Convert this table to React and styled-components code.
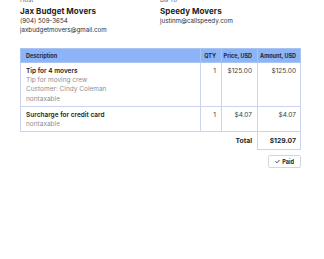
import React from "react"
import styled, { createGlobalStyle } from "styled-components"

const GlobalStyle = createGlobalStyle`
  html, body {
    margin: 0;
    padding: 0;
    background: #ffffff;
  }
  body {
    font-family: Inter, "Liberation Sans", sans-serif;
    color: #1c1f26;
    overflow: hidden;
  }
`

const Page = styled.div`
  width: 324px;
  margin-top: -4px;
  padding: 0 24px 0 20px;
  box-sizing: border-box;
`

const Parties = styled.div`
  display: grid;
  grid-template-columns: 140px 1fr;
`

const Party = styled.div`
  display: flex;
  flex-direction: column;
`

const Label = styled.div`
  font-size: 6px;
  line-height: 8px;
  color: #555b66;
  height: 8px;
`

const Name = styled.div`
  font-size: 8px;
  font-weight: 700;
  line-height: 10px;
  margin-top: 2px;
  letter-spacing: 0.05px;
`

const Line = styled.div`
  font-size: 6.2px;
  line-height: 9px;
  color: #2a2e36;
`

const Table = styled.table`
  width: 280px;
  margin-top: 14px;
  border-collapse: collapse;
  table-layout: fixed;
  font-size: 6.5px;
`

const HeadCell = styled.th`
  background: #8db4f6;
  color: #1d2740;
  font-size: 5.5px;
  font-weight: 700;
  height: 14px;
  white-space: nowrap;
  overflow: hidden;
  padding: 0 ${({ $pad }) => $pad || 4}px 0 ${({ $align }) => ($align ? 0 : 5)}px;
  text-align: ${({ $align }) => $align || "left"};
  border: 1px solid #a9c3f3;
  box-sizing: border-box;
`

const Cell = styled.td`
  vertical-align: top;
  padding: 4px ${({ $pad }) => $pad || 4}px 2px ${({ $align }) => ($align ? 0 : 5)}px;
  line-height: 9.2px;
  white-space: nowrap;
  text-align: ${({ $align }) => $align || "left"};
  border: 1px solid #ccd3ee;
  color: #3a3f48;
`

const TotalCell = styled.td`
  padding: 0 ${({ $pad }) => $pad || 4}px 0 0;
  height: 17px;
  text-align: right;
  font-weight: 700;
  font-size: 6.8px;
  white-space: nowrap;
  color: #1c1f26;
  border: ${({ $boxed }) => ($boxed ? "1px solid #ccd3ee" : "none")};
`

const ItemTitle = styled.div`
  font-weight: 600;
  color: #1c1f26;
`

const ItemNote = styled.div`
  color: #8c8f96;
`

const Actions = styled.div`
  display: flex;
  justify-content: flex-end;
  margin-top: 5px;
  width: 281px;
`

const PaidButton = styled.button`
  display: flex;
  align-items: center;
  gap: 2px;
  height: 13px;
  padding: 0 6px;
  font-family: Inter, "Liberation Sans", sans-serif;
  font-size: 5.6px;
  font-weight: 700;
  color: #1c1f26;
  background: #ffffff;
  border: 1px solid #d3d6de;
  border-radius: 2px;
`

const items = [
  {
    title: "Tip for 4 movers",
    notes: ["Tip for moving crew", "Customer: Cindy Coleman", "nontaxable"],
    qty: 1,
    price: "$125.00",
    amount: "$125.00",
  },
  {
    title: "Surcharge for credit card",
    notes: ["nontaxable"],
    qty: 1,
    price: "$4.07",
    amount: "$4.07",
  },
]

const Check = () => (
  <svg width="5" height="5" viewBox="0 0 10 10" fill="none">
    <path d="M1.5 5.2 L4 7.6 L8.6 2.4" stroke="#1c1f26" strokeWidth="1.6" strokeLinecap="round" strokeLinejoin="round" />
  </svg>
)

const App = () => (
  <>
    <GlobalStyle />
    <Page>
      <Parties>
        <Party>
          <Label>Host</Label>
          <Name>Jax Budget Movers</Name>
          <Line>(904) 509-3654</Line>
          <Line>jaxbudgetmovers@gmail.com</Line>
        </Party>
        <Party>
          <Label>Bill To</Label>
          <Name>Speedy Movers</Name>
          <Line>justinm@callspeedy.com</Line>
        </Party>
      </Parties>

      <Table>
        <colgroup>
          <col style={{ width: 180 }} />
          <col style={{ width: 21 }} />
          <col style={{ width: 36 }} />
          <col style={{ width: 43 }} />
        </colgroup>
        <thead>
          <tr>
            <HeadCell>Description</HeadCell>
            <HeadCell $align="right" $pad={5}>QTY</HeadCell>
            <HeadCell $align="right" $pad={5}>Price, USD</HeadCell>
            <HeadCell $align="right" $pad={4}>Amount, USD</HeadCell>
          </tr>
        </thead>
        <tbody>
          {items.map((item, key) => (
            <tr key={key}>
              <Cell>
                <ItemTitle>{item.title}</ItemTitle>
                {item.notes.map((note, i) => (
                  <ItemNote key={i}>{note}</ItemNote>
                ))}
              </Cell>
              <Cell $align="right" $pad={5}>{item.qty}</Cell>
              <Cell $align="right" $pad={5}>{item.price}</Cell>
              <Cell $align="right" $pad={4}>{item.amount}</Cell>
            </tr>
          ))}
          <tr>
            <TotalCell />
            <TotalCell />
            <TotalCell $pad={5}>Total</TotalCell>
            <TotalCell $boxed $pad={4}>$129.07</TotalCell>
          </tr>
        </tbody>
      </Table>

      <Actions>
        <PaidButton type="button">
          <Check />
          Paid
        </PaidButton>
      </Actions>
    </Page>
  </>
)

export default App
